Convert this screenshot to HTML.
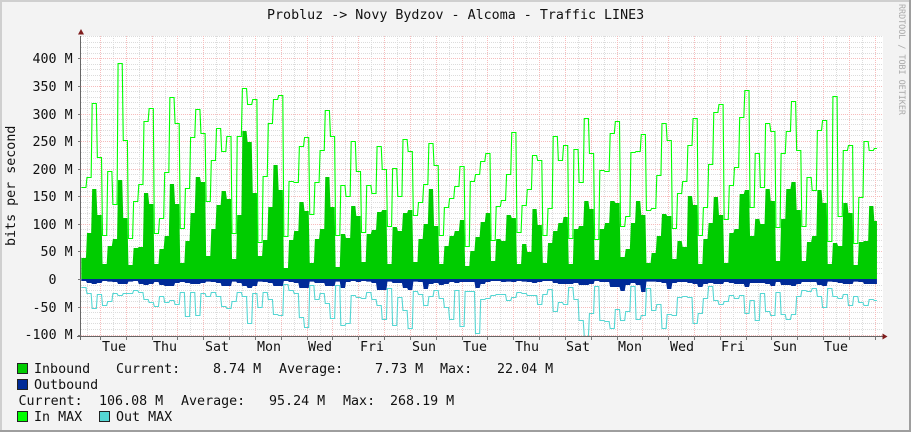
<!DOCTYPE html>
<html><head><meta charset="utf-8"><title>Traffic LINE3</title>
<style>
html,body{margin:0;padding:0;background:#f3f3f3}
svg{display:block}
text{font-family:"DejaVu Sans Mono","Liberation Mono",monospace;font-size:13.33px;fill:#111;white-space:pre}
.l{text-anchor:middle}
</style></head><body>
<svg width="911" height="432" viewBox="0 0 911 432" xmlns="http://www.w3.org/2000/svg">
<rect width="911" height="432" fill="#f3f3f3"/>
<path d="M0 1H911M1 0V432" stroke="#cfcfcf" stroke-width="2" fill="none"/>
<path d="M0 431H911M910 0V432" stroke="#9e9e9e" stroke-width="2" fill="none"/>
<rect x="81" y="36" width="802" height="300" fill="#fff"/>
<g fill="none" stroke-width="1" stroke-dasharray="1 1">
<path stroke="#dcdcdc" d="M81 273.5H883M81 268.5H883M81 262.5H883M81 257.5H883M81 246.5H883M81 240.5H883M81 235.5H883M81 229.5H883M81 218.5H883M81 213.5H883M81 207.5H883M81 202.5H883M81 191.5H883M81 185.5H883M81 180.5H883M81 174.5H883M81 163.5H883M81 158.5H883M81 152.5H883M81 147.5H883M81 135.5H883M81 130.5H883M81 124.5H883M81 119.5H883M81 108.5H883M81 102.5H883M81 97.5H883M81 91.5H883M81 80.5H883M81 75.5H883M81 69.5H883M81 64.5H883M81 53.5H883M81 47.5H883M81 42.5H883M81 36.5H883M81 285.5H883M81 290.5H883M81 296.5H883M81 301.5H883M81 312.5H883M81 318.5H883M81 323.5H883M81 329.5H883"/>
<path stroke="#dcdcdc" d="M87.5 36V336M113.5 36V336M139.5 36V336M165.5 36V336M190.5 36V336M216.5 36V336M242.5 36V336M268.5 36V336M294.5 36V336M320.5 36V336M345.5 36V336M371.5 36V336M397.5 36V336M423.5 36V336M449.5 36V336M475.5 36V336M500.5 36V336M526.5 36V336M552.5 36V336M578.5 36V336M604.5 36V336M630.5 36V336M655.5 36V336M681.5 36V336M707.5 36V336M733.5 36V336M758.5 36V336M784.5 36V336M810.5 36V336M836.5 36V336M862.5 36V336"/>
<path stroke="#f7bcbc" d="M81 58.5H883M81 86.5H883M81 114.5H883M81 141.5H883M81 169.5H883M81 196.5H883M81 224.5H883M81 251.5H883M81 307.5H883M81 335.5H883"/>
<path stroke="#f7bcbc" d="M100.5 36V336M126.5 36V336M152.5 36V336M177.5 36V336M203.5 36V336M229.5 36V336M255.5 36V336M281.5 36V336M307.5 36V336M332.5 36V336M358.5 36V336M384.5 36V336M410.5 36V336M436.5 36V336M462.5 36V336M487.5 36V336M513.5 36V336M539.5 36V336M565.5 36V336M591.5 36V336M617.5 36V336M642.5 36V336M668.5 36V336M694.5 36V336M720.5 36V336M746.5 36V336M771.5 36V336M797.5 36V336M823.5 36V336M849.5 36V336M875.5 36V336"/>
</g>
<g transform="translate(81.3,55) scale(5.18,0.33333)">
<path fill="#00cc00" d="M0 672V609H.9L1.1 534H1.9L2.1 402H2.9L3.1 480H3.9L4.1 627H4.9L5.1 573H5.9L6.1 552H6.9L7.1 375H7.9L8.1 489H8.9L9.1 630H9.9L10.1 579H10.9L11.1 576H11.9L12.1 414H12.9L13.1 447H13.9L14.1 627H14.9L15.1 582H15.9L16.1 543H16.9L17.1 387H17.9L18.1 447H18.9L19.1 624H19.9L20.1 558H20.9L21.1 474H21.9L22.1 366H22.9L23.1 381H23.9L24.1 603H24.9L25.1 522H25.9L26.1 450H26.9L27.1 408H27.9L28.1 432H28.9L29.1 612H29.9L30.1 480H30.9L31.1 228H31.9L32.1 261H32.9L33.1 414H33.9L34.1 603H34.9L35.1 555H35.9L36.1 456H36.9L37.1 330H37.9L38.1 405H38.9L39.1 639H39.9L40.1 555H40.9L41.1 528H41.9L42.1 441H42.9L43.1 468H43.9L44.1 624H44.9L45.1 552H45.9L46.1 522H46.9L47.1 366H47.9L48.1 456H48.9L49.1 636H49.9L50.1 537H50.9L51.1 549H51.9L52.1 453H52.9L53.1 483H53.9L54.1 621H54.9L55.1 537H55.9L56.1 525H56.9L57.1 471H57.9L58.1 465H58.9L59.1 627H59.9L60.1 516H60.9L61.1 528H61.9L62.1 474H62.9L63.1 465H63.9L64.1 621H64.9L65.1 552H65.9L66.1 507H66.9L67.1 402H67.9L68.1 513H68.9L69.1 627H69.9L70.1 573H70.9L71.1 543H71.9L72.1 528H72.9L73.1 495H73.9L74.1 633H74.9L75.1 588H75.9L76.1 546H76.9L77.1 501H77.9L78.1 474H78.9L79.1 618H79.9L80.1 552H80.9L81.1 558H81.9L82.1 480H82.9L83.1 489H83.9L84.1 627H84.9L85.1 567H85.9L86.1 591H86.9L87.1 462H87.9L88.1 510H88.9L89.1 624H89.9L90.1 564H90.9L91.1 528H91.9L92.1 504H92.9L93.1 486H93.9L94.1 627H94.9L95.1 522H95.9L96.1 513H96.9L97.1 438H97.9L98.1 462H98.9L99.1 615H99.9L100.1 522H100.9L101.1 504H101.9L102.1 438H102.9L103.1 444H103.9L104.1 606H104.9L105.1 582H105.9L106.1 504H106.9L107.1 438H107.9L108.1 480H108.9L109.1 624H109.9L110.1 594H110.9L111.1 543H111.9L112.1 477H112.9L113.1 483H113.9L114.1 612H114.9L115.1 558H115.9L116.1 576H116.9L117.1 423H117.9L118.1 450H118.9L119.1 627H119.9L120.1 552H120.9L121.1 504H121.9L122.1 426H122.9L123.1 480H123.9L124.1 624H124.9L125.1 534H125.9L126.1 522H126.9L127.1 417H127.9L128.1 405H128.9L129.1 543H129.9L130.1 492H130.9L131.1 507H131.9L132.1 402H132.9L133.1 438H133.9L134.1 618H134.9L135.1 492H135.9L136.1 402H136.9L137.1 381H137.9L138.1 465H138.9L139.1 618H139.9L140.1 561H140.9L141.1 543H141.9L142.1 405H142.9L143.1 444H143.9L144.1 627H144.9L145.1 564H145.9L146.1 573H146.9L147.1 444H147.9L148.1 474H148.9L149.1 630H149.9L150.1 561H150.9L151.1 558H151.9L152.1 453H152.9L153.1 498H153.6V672Z"/>
<path fill="#002a97" d="M0 672V678H.9L1.1 684H1.9L2.1 687H2.9L3.1 684H3.9L4.1 678H4.9L5.1 680H5.9L6.1 681H6.9L7.1 687H7.9L8.1 687H8.9L9.1 680H9.9L10.1 678H10.9L11.1 687H11.9L12.1 690H12.9L13.1 687H13.9L14.1 681H14.9L15.1 690H15.9L16.1 693H16.9L17.1 693H17.9L18.1 684H18.9L19.1 681H19.9L20.1 684H20.9L21.1 687H21.9L22.1 687H22.9L23.1 684H23.9L24.1 680H24.9L25.1 681H25.9L26.1 684H26.9L27.1 693H27.9L28.1 693H28.9L29.1 680H29.9L30.1 684H30.9L31.1 693H31.9L32.1 699H32.9L33.1 693H33.9L34.1 680H34.9L35.1 681H35.9L36.1 684H36.9L37.1 693H37.9L38.1 693H38.9L39.1 678H39.9L40.1 681H40.9L41.1 684H41.9L42.1 699H42.9L43.1 699H43.9L44.1 680H44.9L45.1 684H45.9L46.1 684H46.9L47.1 693H47.9L48.1 693H48.9L49.1 680H49.9L50.1 699H50.9L51.1 681H51.9L52.1 678H52.9L53.1 681H53.9L54.1 678H54.9L55.1 680H55.9L56.1 684H56.9L57.1 705H57.9L58.1 705H58.9L59.1 680H59.9L60.1 684H60.9L61.1 684H61.9L62.1 699H62.9L63.1 705H63.9L64.1 680H64.9L65.1 681H65.9L66.1 702H66.9L67.1 687H67.9L68.1 684H68.9L69.1 690H69.9L70.1 687H70.9L71.1 681H71.9L72.1 684H72.9L73.1 681H73.9L74.1 681H74.9L75.1 681H75.9L76.1 699H76.9L77.1 687H77.9L78.1 681H78.9L79.1 678H79.9L80.1 678H80.9L81.1 681H81.9L82.1 680H82.9L83.1 681H83.9L84.1 678H84.9L85.1 680H85.9L86.1 681H86.9L87.1 684H87.9L88.1 681H88.9L89.1 678H89.9L90.1 678H90.9L91.1 684H91.9L92.1 687H92.9L93.1 687H93.9L94.1 687H94.9L95.1 684H95.9L96.1 690H96.9L97.1 690H97.9L98.1 687H98.9L99.1 678H99.9L100.1 681H100.9L101.1 681H101.9L102.1 696H102.9L103.1 696H103.9L104.1 708H104.9L105.1 690H105.9L106.1 684H106.9L107.1 690H107.9L108.1 711H108.9L109.1 680H109.9L110.1 680H110.9L111.1 681H111.9L112.1 684H112.9L113.1 702H113.9L114.1 684H114.9L115.1 681H115.9L116.1 681H116.9L117.1 684H117.9L118.1 687H118.9L119.1 696H119.9L120.1 687H120.9L121.1 684H121.9L122.1 687H122.9L123.1 687H123.9L124.1 681H124.9L125.1 684H125.9L126.1 687H126.9L127.1 687H127.9L128.1 696H128.9L129.1 684H129.9L130.1 684H130.9L131.1 684H131.9L132.1 687H132.9L133.1 693H133.9L134.1 681H134.9L135.1 690H135.9L136.1 690H136.9L137.1 693H137.9L138.1 687H138.9L139.1 681H139.9L140.1 681H140.9L141.1 681H141.9L142.1 690H142.9L143.1 693H143.9L144.1 680H144.9L145.1 681H145.9L146.1 684H146.9L147.1 687H147.9L148.1 687H148.9L149.1 680H149.9L150.1 681H150.9L151.1 687H151.9L152.1 687H152.9L153.1 687H153.6V672Z"/>
</g>
<g transform="translate(81.3,55.5) scale(5.18,0.33333)" fill="none">
<path stroke="#00ff00" stroke-width="1.1" vector-effect="non-scaling-stroke" d="M0 396H.9L1.1 366H1.9L2.1 144H2.9L3.1 306H3.9L4.1 540H4.9L5.1 348H5.9L6.1 447H6.9L7.1 24H7.9L8.1 255H8.9L9.1 549H9.9L10.1 438H10.9L11.1 387H11.9L12.1 198H12.9L13.1 159H13.9L14.1 534H14.9L15.1 489H15.9L16.1 351H16.9L17.1 126H17.9L18.1 204H18.9L19.1 519H19.9L20.1 399H20.9L21.1 246H21.9L22.1 162H22.9L23.1 234H23.9L24.1 438H24.9L25.1 315H25.9L26.1 219H26.9L27.1 288H27.9L28.1 243H28.9L29.1 534H29.9L30.1 243H30.9L31.1 99H31.9L32.1 147H32.9L33.1 132H33.9L34.1 561H34.9L35.1 363H35.9L36.1 204H36.9L37.1 132H37.9L38.1 120H38.9L39.1 543H39.9L40.1 378H40.9L41.1 381H41.9L42.1 273H42.9L43.1 246H43.9L44.1 477H44.9L45.1 381H45.9L46.1 285H46.9L47.1 165H47.9L48.1 243H48.9L49.1 540H49.9L50.1 390H50.9L51.1 423H51.9L52.1 258H52.9L53.1 348H53.9L54.1 531H54.9L55.1 390H55.9L56.1 414H56.9L57.1 273H57.9L58.1 342H58.9L59.1 513H59.9L60.1 339H60.9L61.1 423H61.9L62.1 252H62.9L63.1 288H63.9L64.1 480H64.9L65.1 441H65.9L66.1 387H66.9L67.1 264H67.9L68.1 330H68.9L69.1 540H69.9L70.1 456H70.9L71.1 429H71.9L72.1 393H72.9L73.1 333H73.9L74.1 573H74.9L75.1 378H75.9L76.1 357H76.9L77.1 318H77.9L78.1 294H78.9L79.1 555H79.9L80.1 453H80.9L81.1 435H81.9L82.1 357H82.9L83.1 231H83.9L84.1 531H84.9L85.1 450H85.9L86.1 402H86.9L87.1 300H87.9L88.1 315H88.9L89.1 540H89.9L90.1 459H90.9L91.1 243H91.9L92.1 315H92.9L93.1 270H93.9L94.1 549H94.9L95.1 282H95.9L96.1 381H96.9L97.1 189H97.9L98.1 294H98.9L99.1 552H99.9L100.1 345H100.9L101.1 348H101.9L102.1 234H102.9L103.1 198H103.9L104.1 513H104.9L105.1 483H105.9L106.1 291H106.9L107.1 288H107.9L108.1 237H108.9L109.1 465H109.9L110.1 459H110.9L111.1 360H111.9L112.1 204H112.9L113.1 255H113.9L114.1 519H114.9L115.1 414H115.9L116.1 378H116.9L117.1 270H117.9L118.1 189H118.9L119.1 540H119.9L120.1 456H120.9L121.1 327H121.9L122.1 171H122.9L123.1 147H123.9L124.1 492H124.9L125.1 390H125.9L126.1 336H126.9L127.1 186H127.9L128.1 105H128.9L129.1 456H129.9L130.1 294H130.9L131.1 396H131.9L132.1 204H132.9L133.1 228H133.9L134.1 516H134.9L135.1 294H135.9L136.1 228H136.9L137.1 138H137.9L138.1 285H138.9L139.1 513H139.9L140.1 366H140.9L141.1 405H141.9L142.1 225H142.9L143.1 195H143.9L144.1 558H144.9L145.1 123H145.9L146.1 483H146.9L147.1 285H147.9L148.1 270H148.9L149.1 564H149.9L150.1 426H150.9L151.1 258H151.9L152.1 285H152.9L153.1 279H153.6"/>
<path stroke="#55d6d3" stroke-width="1.1" vector-effect="non-scaling-stroke" d="M0 696H.9L1.1 714H1.9L2.1 759H2.9L3.1 717H3.9L4.1 750H4.9L5.1 738H5.9L6.1 714H6.9L7.1 720H7.9L8.1 714H8.9L9.1 714H9.9L10.1 705H10.9L11.1 711H11.9L12.1 732H12.9L13.1 741H13.9L14.1 753H14.9L15.1 723H15.9L16.1 741H16.9L17.1 735H17.9L18.1 747H18.9L19.1 711H19.9L20.1 783H20.9L21.1 711H21.9L22.1 780H22.9L23.1 714H23.9L24.1 723H24.9L25.1 711H25.9L26.1 723H26.9L27.1 753H27.9L28.1 759H28.9L29.1 738H29.9L30.1 711H30.9L31.1 723H31.9L32.1 804H32.9L33.1 714H33.9L34.1 756H34.9L35.1 711H35.9L36.1 732H36.9L37.1 777H37.9L38.1 780H38.9L39.1 687H39.9L40.1 705H40.9L41.1 714H41.9L42.1 786H42.9L43.1 816H43.9L44.1 690H44.9L45.1 732H45.9L46.1 714H46.9L47.1 744H47.9L48.1 789H48.9L49.1 690H49.9L50.1 810H50.9L51.1 804H51.9L52.1 720H52.9L53.1 726H53.9L54.1 729H54.9L55.1 711H55.9L56.1 732H56.9L57.1 750H57.9L58.1 792H58.9L59.1 699H59.9L60.1 810H60.9L61.1 726H61.9L62.1 765H62.9L63.1 819H63.9L64.1 708H64.9L65.1 717H65.9L66.1 750H66.9L67.1 723H67.9L68.1 705H68.9L69.1 729H69.9L70.1 756H70.9L71.1 792H71.9L72.1 705H72.9L73.1 813H73.9L74.1 708H74.9L75.1 708H75.9L76.1 834H76.9L77.1 732H77.9L78.1 729H78.9L79.1 720H79.9L80.1 717H80.9L81.1 717H81.9L82.1 735H82.9L83.1 726H83.9L84.1 711H84.9L85.1 714H85.9L86.1 720H86.9L87.1 720H87.9L88.1 747H88.9L89.1 717H89.9L90.1 702H90.9L91.1 768H91.9L92.1 741H92.9L93.1 747H93.9L94.1 696H94.9L95.1 732H95.9L96.1 795H96.9L97.1 843H97.9L98.1 774H98.9L99.1 693H99.9L100.1 795H100.9L101.1 798H101.9L102.1 819H102.9L103.1 762H103.9L104.1 795H104.9L105.1 768H105.9L106.1 693H106.9L107.1 792H107.9L108.1 780H108.9L109.1 699H109.9L110.1 765H110.9L111.1 747H111.9L112.1 819H112.9L113.1 777H113.9L114.1 780H114.9L115.1 726H115.9L116.1 723H116.9L117.1 726H117.9L118.1 804H118.9L119.1 774H119.9L120.1 729H120.9L121.1 693H121.9L122.1 735H122.9L123.1 747H123.9L124.1 738H124.9L125.1 720H125.9L126.1 729H126.9L127.1 720H127.9L128.1 774H128.9L129.1 735H129.9L130.1 795H130.9L131.1 714H131.9L132.1 768H132.9L133.1 780H133.9L134.1 711H134.9L135.1 777H135.9L136.1 792H136.9L137.1 777H137.9L138.1 723H138.9L139.1 705H139.9L140.1 708H140.9L141.1 699H141.9L142.1 723H142.9L143.1 756H143.9L144.1 699H144.9L145.1 723H145.9L146.1 729H146.9L147.1 717H147.9L148.1 750H148.9L149.1 723H149.9L150.1 741H150.9L151.1 750H151.9L152.1 732H152.9L153.1 735H153.6"/>
</g>
<path d="M80.5 36V340M77 336.5H884" stroke="#666" stroke-width="1" fill="none"/>
<path stroke="#777" stroke-width="1" fill="none" d="M78 58.5H81M78 86.5H81M78 114.5H81M78 141.5H81M78 169.5H81M78 196.5H81M78 224.5H81M78 251.5H81M78 279.5H81M78 307.5H81M78 335.5H81M100.5 336V340M126.5 336V340M152.5 336V340M177.5 336V340M203.5 336V340M229.5 336V340M255.5 336V340M281.5 336V340M307.5 336V340M332.5 336V340M358.5 336V340M384.5 336V340M410.5 336V340M436.5 336V340M462.5 336V340M487.5 336V340M513.5 336V340M539.5 336V340M565.5 336V340M591.5 336V340M617.5 336V340M642.5 336V340M668.5 336V340M694.5 336V340M720.5 336V340M746.5 336V340M771.5 336V340M797.5 336V340M823.5 336V340M849.5 336V340M875.5 336V340"/>
<path d="M78 34.5L81 29L84 34.5Z" fill="#7f1d1d"/>
<path d="M882.5 333.5L887.5 336.5L882.5 339.5Z" fill="#7f1d1d"/>
<text x="267" y="19">Probluz -&gt; Novy Bydzov - Alcoma - Traffic LINE3</text>
<text transform="translate(15,246) rotate(-90)">bits per second</text>
<text transform="translate(899,4) rotate(90)" style="font-size:8.4px;fill:#aaa">RRDTOOL / TOBI OETIKER</text>
<text x="32.5" y="63">400 M</text>
<text x="32.5" y="91">350 M</text>
<text x="32.5" y="119">300 M</text>
<text x="32.5" y="146">250 M</text>
<text x="32.5" y="174">200 M</text>
<text x="32.5" y="201">150 M</text>
<text x="32.5" y="229">100 M</text>
<text x="40.5" y="256">50 M</text>
<text x="48.5" y="284">0</text>
<text x="32.5" y="312">-50 M</text>
<text x="24.5" y="339">-100 M</text>
<text class="l" x="114" y="351">Tue</text>
<text class="l" x="165" y="351">Thu</text>
<text class="l" x="217" y="351">Sat</text>
<text class="l" x="269" y="351">Mon</text>
<text class="l" x="320" y="351">Wed</text>
<text class="l" x="372" y="351">Fri</text>
<text class="l" x="424" y="351">Sun</text>
<text class="l" x="475" y="351">Tue</text>
<text class="l" x="527" y="351">Thu</text>
<text class="l" x="578" y="351">Sat</text>
<text class="l" x="630" y="351">Mon</text>
<text class="l" x="682" y="351">Wed</text>
<text class="l" x="733" y="351">Fri</text>
<text class="l" x="785" y="351">Sun</text>
<text class="l" x="836" y="351">Tue</text>
<rect x="17.5" y="363.5" width="10" height="10" fill="#00cc00" stroke="#222"/>
<rect x="17.5" y="379.5" width="10" height="10" fill="#002a97" stroke="#222"/>
<rect x="17.5" y="411.5" width="10" height="10" fill="#00ff00" stroke="#222"/>
<rect x="99.5" y="411.5" width="10" height="10" fill="#55d6d3" stroke="#222"/>
<text x="34" y="373">Inbound</text>
<text x="116" y="373">Current:</text>
<text x="213" y="373">8.74 M</text>
<text x="279" y="373">Average:</text>
<text x="375" y="373">7.73 M</text>
<text x="440" y="373">Max:</text>
<text x="497" y="373">22.04 M</text>
<text x="34" y="389">Outbound</text>
<text x="18.5" y="405">Current:</text>
<text x="99" y="405">106.08 M</text>
<text x="181" y="405">Average:</text>
<text x="269" y="405">95.24 M</text>
<text x="343" y="405">Max:</text>
<text x="390" y="405">268.19 M</text>
<text x="34" y="421">In MAX</text>
<text x="116" y="421">Out MAX</text>
</svg>
</body></html>
